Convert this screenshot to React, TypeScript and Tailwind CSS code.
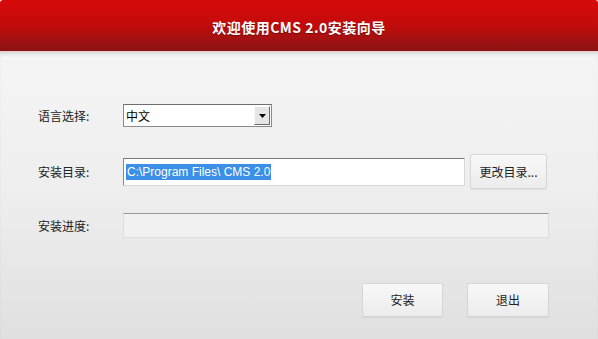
import React, { useState } from "react";

const cjk = "font-['Noto_Sans_CJK_SC',sans-serif]";

const Label: React.FC<{ text: string }> = ({ text }) => (
  <span className={`w-[85px] shrink-0 text-[12px] text-[#222] ${cjk}`}>{text}</span>
);

const PushButton: React.FC<{ label: string; className?: string }> = ({ label, className }) => (
  <button
    className={`flex items-center justify-center rounded-[2px] border border-[#d6d6d6] bg-gradient-to-b from-[#f8f8f8] to-[#ececec] text-[12px] text-[#222] shadow-[0_1px_1px_rgba(0,0,0,0.06)] ${cjk} ${className ?? ""}`}
  >
    {label}
  </button>
);

export default function App() {
  const [lang] = useState("中文");
  const [dir] = useState("C:\\Program Files\\ CMS 2.0");

  return (
    <div className="flex h-[339px] w-[598px] flex-col overflow-hidden bg-white">
      {/* Header */}
      <div className="flex h-[51px] shrink-0 items-center justify-center rounded-t-[3px] bg-gradient-to-b from-[#d80a0a] via-[#c20b0b] to-[#8a1313]">
        <h1
          className={`mt-[4px] text-[14px] font-bold tracking-[0.5px] text-white [text-shadow:0_1px_1px_rgba(0,0,0,0.35)] ${cjk}`}
        >
          欢迎使用CMS 2.0安装向导
        </h1>
      </div>
      <div className="h-[1px] shrink-0 bg-[#efc9c9]" />

      {/* Body */}
      <div className="flex flex-1 flex-col bg-gradient-to-b from-[#f5f5f5] via-[#eeeeee] to-[#e0e0e0] pl-[38px] pr-[49px] pt-[52px] shadow-[inset_0_4px_4px_-2px_rgba(0,0,0,0.12)]">
        {/* Language */}
        <div className="flex h-[23px] items-center">
          <Label text="语言选择:" />
          <div className="flex h-[23px] w-[149px] items-center border border-[#8a8a8a] border-t-[#6e6e6e] bg-white pl-[2px] pr-[1px]">
            <span className={`flex-1 text-[12px] text-black ${cjk}`}>{lang}</span>
            <div className="flex h-[19px] w-[16px] items-center justify-center border border-[#fafafa] border-b-[#6a6a6a] border-r-[#6a6a6a] bg-[#e6e6e6]">
              <svg width="7" height="4" viewBox="0 0 7 4">
                <path d="M0 0h7L3.5 4z" fill="#000" />
              </svg>
            </div>
          </div>
        </div>

        {/* Install dir */}
        <div className="mt-[27px] flex h-[35px] items-center">
          <Label text="安装目录:" />
          <div className="flex h-[28px] w-[342px] items-center border border-[#d8d8d8] border-l-[#8a8a8a] border-t-[#7a7a7a] bg-white pl-[2px]">
            <span className="bg-[#3b8fe6] px-[1px] font-['Liberation_Sans',sans-serif] text-[12px] leading-[16px] text-white">
              {dir}
            </span>
          </div>
          <PushButton label="更改目录..." className="ml-[5px] h-[35px] w-[77px]" />
        </div>

        {/* Progress */}
        <div className="mt-[24px] flex h-[25px] items-center">
          <Label text="安装进度:" />
          <div className="h-[25px] flex-1 border border-[#dedede] border-t-[#9a9a9a] bg-[#f1f1f1]" />
        </div>

        {/* Actions */}
        <div className="mt-[45px] flex justify-end gap-[24px]">
          <PushButton label="安装" className="h-[34px] w-[81px]" />
          <PushButton label="退出" className="h-[34px] w-[82px]" />
        </div>
      </div>
    </div>
  );
}
